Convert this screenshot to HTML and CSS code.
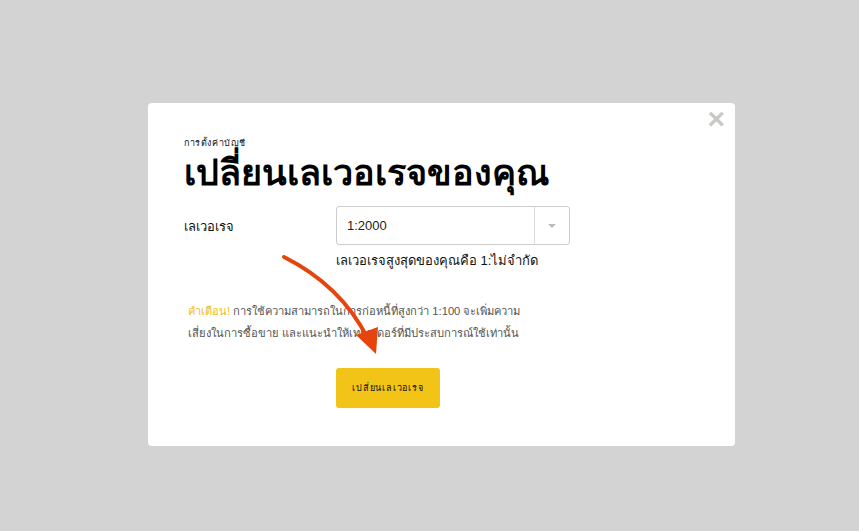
FILE: index.html
```html
<!DOCTYPE html>
<html>
<head>
    <title>เปลี่ยนเลเวอเรจ</title>
    <link rel="stylesheet" href="styles.css">
</head>
<body>
    <div class="modal">
        <span class="modal-close">&times;</span>
        <div class="subtitle">การตั้งค่าบัญชี</div>
        <h1 class="title">เปลี่ยนเลเวอเรจของคุณ</h1>

        <div class="form-row">
            <label class="form-label">เลเวอเรจ</label>
            <div class="form-control">
                <div class="select">
                    <span class="select-value">1:2000</span>
                    <span class="select-arrow"></span>
                </div>
                <div class="hint">เลเวอเรจสูงสุดของคุณคือ 1:ไม่จำกัด</div>
            </div>
        </div>

        <p class="warning">
            <span class="warning-tag">คำเตือน!</span> การใช้ความสามารถในการก่อหนี้ที่สูงกว่า 1:100 จะเพิ่มความ<br>
            เสี่ยงในการซื้อขาย และแนะนำให้เทรดเดอร์ที่มีประสบการณ์ใช้เท่านั้น
        </p>

        <div class="actions">
            <button class="btn-primary">เปลี่ยนเลเวอเรจ</button>
        </div>

        <!-- annotation arrow -->
        <svg class="arrow" width="120" height="110" viewBox="0 0 120 110">
            <path d="M4 4 C 40 22, 70 50, 88 86" fill="none" stroke="#e5450c" stroke-width="4" stroke-linecap="round"/>
            <path d="M76 82 L96 101 L98 74 Z" fill="#e5450c"/>
        </svg>
    </div>
</body>
</html>
```

FILE: styles.css
```css
body {
    margin: 0;
    background: #d3d3d3;
    font-family: "Liberation Sans", Arial, sans-serif;
    height: 531px;
}

.modal {
    position: relative;
    box-sizing: border-box;
    width: 587px;
    height: 343px;
    margin: 103px 0 0 148px;
    padding: 34px 36px 0 36px;
    background: #fff;
    border-radius: 4px;
}

.modal-close {
    position: absolute;
    top: 1px;
    right: 10px;
    font-size: 30px;
    line-height: 30px;
    color: #c8c8c8;
    font-weight: bold;
}

.subtitle {
    font-size: 9px;
    letter-spacing: 0.6px;
    color: #111;
    line-height: 12px;
}

.title {
    margin: 2px 0 0 0;
    font-size: 36px;
    font-weight: bold;
    line-height: 44px;
    color: #000;
}

.form-row {
    display: flex;
    margin-top: 11px;
}

.form-label {
    width: 152px;
    font-size: 13px;
    padding-top: 10px;
    color: #111;
}

.form-control {
    width: 234px;
}

.select {
    display: flex;
    height: 39px;
    box-sizing: border-box;
    border: 1px solid #ccc;
    border-radius: 3px;
}

.select-value {
    flex: 1;
    padding: 11px 10px;
    font-size: 13px;
    color: #222;
}

.select-arrow {
    width: 34px;
    border-left: 1px solid #ddd;
    display: flex;
    align-items: center;
    justify-content: center;
}

.select-arrow::after {
    content: "";
    border-left: 4px solid transparent;
    border-right: 4px solid transparent;
    border-top: 4px solid #bbb;
}

.hint {
    margin-top: 5px;
    font-size: 13px;
    color: #111;
}

.warning {
    margin: 29px 0 0 4px;
    font-size: 11.2px;
    line-height: 22px;
    color: #555;
}

.warning-tag {
    color: #f0c020;
}

.actions {
    margin: 24px 0 0 152px;
}

.btn-primary {
    width: 104px;
    height: 40px;
    background: #f2c418;
    border: none;
    border-radius: 3px;
    font-family: "Liberation Sans", Arial, sans-serif;
    font-size: 9px;
    letter-spacing: 0.8px;
    color: #111;
}

.arrow {
    position: absolute;
    left: 132px;
    top: 150px;
}
```
